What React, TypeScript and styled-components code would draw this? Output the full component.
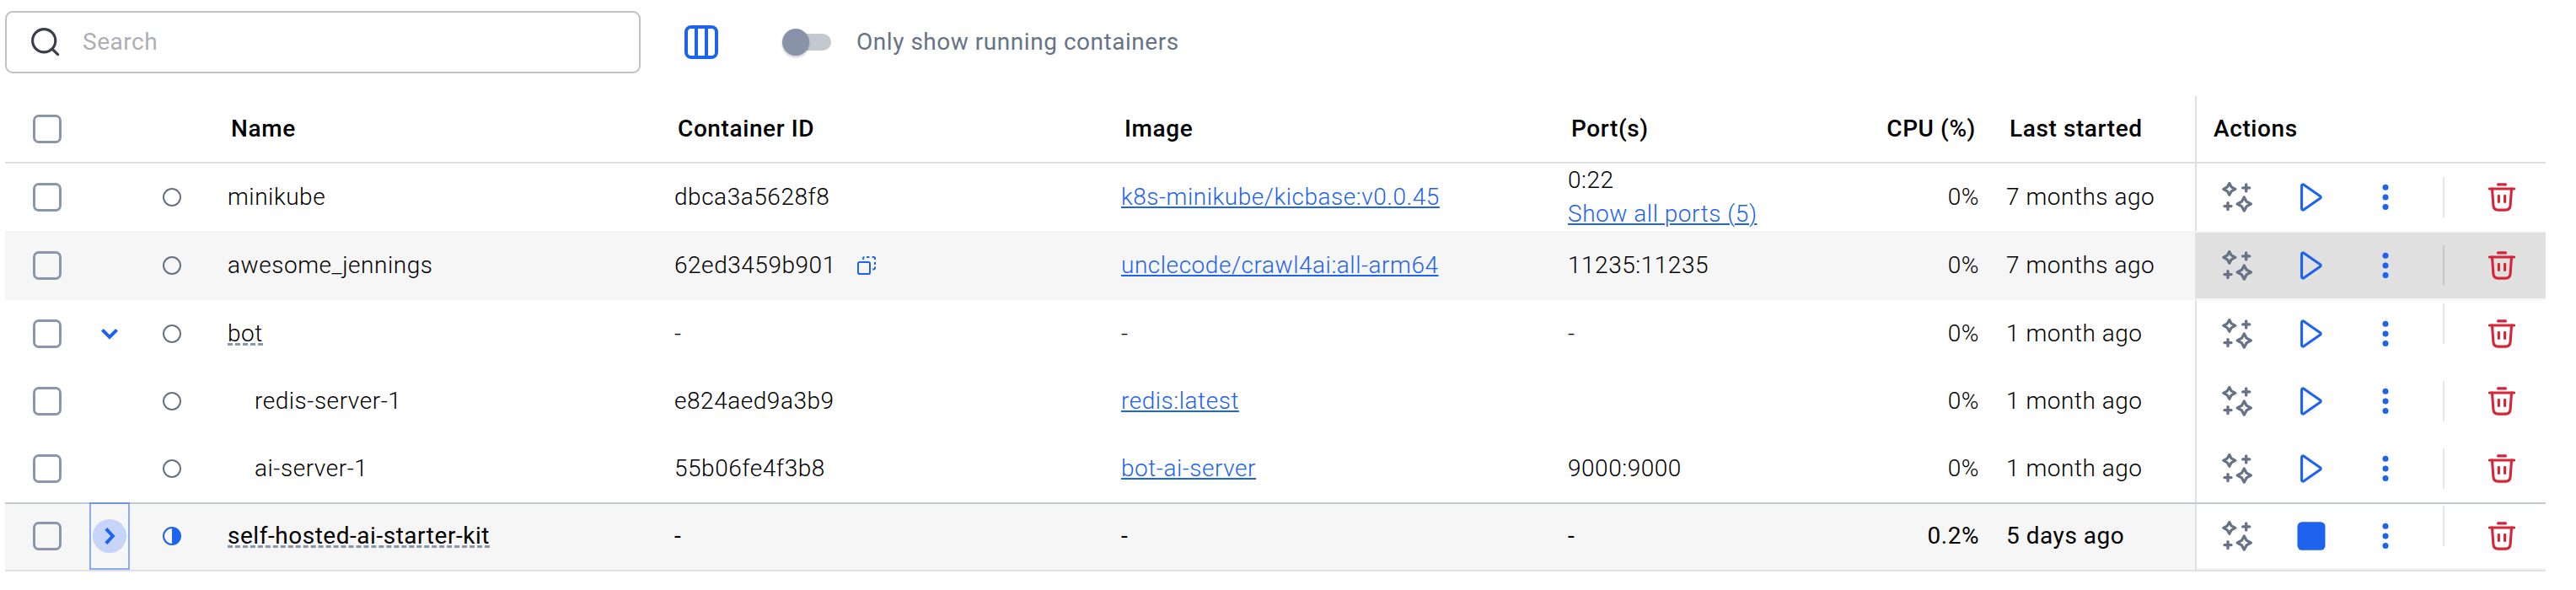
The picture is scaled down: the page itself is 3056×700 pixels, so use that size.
import React from "react";
import styled, { createGlobalStyle, css } from "styled-components";

const blue = "#1d63ed";
const slate = "#677285";
const slateLight = "#8b95ab";
const line = "#e0e0e0";
const red = "#d52536";

const GlobalStyle = createGlobalStyle`
  * { box-sizing: border-box; }
  body { margin: 0; background: #fff; }
`;

const Page = styled.main`
  width: 3056px;
  height: 700px;
  padding: 13px 36px 0 6px;
  overflow: hidden;
  background: #fff;
  color: #000;
  font-family: Roboto, sans-serif;
  font-size: 28px;
  font-weight: 300;
  line-height: 40px;
  letter-spacing: 0.53px;
`;

const Toolbar = styled.header`
  display: flex;
  align-items: center;
  height: 74px;
  margin-bottom: 27px;
`;

const SearchBox = styled.label`
  display: flex;
  align-items: center;
  gap: 26px;
  width: 754px;
  height: 74px;
  padding-left: 28px;
  border: 2px solid #c1c1c3;
  border-radius: 9px;
`;

const SearchInput = styled.input`
  flex: 1;
  min-width: 0;
  padding: 0;
  border: 0;
  outline: 0;
  background: none;
  font: inherit;
  font-weight: 400;
  letter-spacing: 0.53px;
  &::placeholder {
    color: #adafb4;
    opacity: 1;
  }
`;

const ColumnsButton = styled.button`
  display: flex;
  margin-left: 52px;
  padding: 0;
  border: 0;
  background: none;
`;

const Switch = styled.span`
  position: relative;
  width: 58px;
  height: 32px;
  margin-left: 76px;
`;

const SwitchTrack = styled.span`
  position: absolute;
  inset: 6px 0 6px 4px;
  border-radius: 10px;
  background: #c4c8d1;
`;

const SwitchKnob = styled.span`
  position: absolute;
  top: 0;
  left: 0;
  width: 32px;
  height: 32px;
  border-radius: 50%;
  background: #8993a8;
  box-shadow: 0 2px 3px rgba(0, 0, 0, 0.22);
`;

const SwitchLabel = styled.span`
  margin-left: 30px;
  color: ${slate};
  font-weight: 400;
`;

const Table = styled.section`
  display: flex;
  flex-direction: column;
`;

type RowKind = "plain" | "ruled" | "hovered" | "selected";

const Row = styled.div<{ $kind: RowKind }>`
  display: grid;
  grid-template-columns: 100px 48px 100px 530px 530px 530px 346px 174px 240px 416px;
  grid-template-rows: minmax(0, 1fr);
  height: 80px;
  ${(p) =>
    p.$kind === "ruled" &&
    css`
      height: 82px;
      border-bottom: 2px solid #f5f5f5;
    `}
  ${(p) =>
    p.$kind === "hovered" &&
    css`
      background: #f6f6f6;
      border-bottom: 2px solid #f5f5f5;
    `}
  ${(p) =>
    p.$kind === "selected" &&
    css`
      height: 82px;
      border-top: 2px solid #c4c8d1;
      border-bottom: 2px solid ${line};
      background: #f6f6f6;
      font-weight: 400;
      & > * {
        padding-bottom: 2px;
      }
    `}
`;

const HeaderRow = styled(Row)`
  border-bottom: 2px solid ${line};
  font-weight: 500;
  letter-spacing: 0.6px;
`;

const Cell = styled.div`
  display: flex;
  align-items: center;
  min-width: 0;
  padding-left: 16px;
  white-space: nowrap;
`;

const NameCell = styled(Cell)<{ $child?: boolean }>`
  padding-left: ${(p) => (p.$child ? 48 : 16)}px;
`;

const PortsCell = styled(Cell)`
  flex-direction: column;
  align-items: flex-start;
  justify-content: center;
`;

const NumberCell = styled(Cell)`
  justify-content: flex-end;
  padding-right: 16px;
`;

const HeadCell = styled(Cell)`
  padding-left: 20px;
`;

const HeadNumberCell = styled(NumberCell)`
  padding-right: 20px;
`;

const CheckCell = styled(Cell)`
  padding-left: 33px;
`;

const CenterCell = styled(Cell)`
  justify-content: center;
  padding-left: 0;
`;

const Checkbox = styled.span`
  width: 34px;
  height: 34px;
  border: 3px solid ${slateLight};
  border-radius: 7px;
`;

const Link = styled.a`
  color: ${blue};
  text-decoration: underline 2px;
  text-underline-offset: 2px;
`;

const GroupName = styled.span`
  display: block;
  height: 26px;
  margin-top: 2px;
  border-bottom: 3px dashed ${slateLight};
  line-height: 23px;
`;

const CopyButton = styled.span`
  display: flex;
  margin-left: 25px;
`;

const ExpandButton = styled.span<{ $focused: boolean }>`
  display: flex;
  flex: none;
  align-items: center;
  justify-content: center;
  width: 48px;
  height: 80px;
  ${(p) =>
    p.$focused &&
    css`
      border: 2px solid rgba(29, 99, 237, 0.5);
    `}
`;

const ExpandHalo = styled.span<{ $focused: boolean }>`
  display: flex;
  flex: none;
  width: 40px;
  height: 40px;
  border-radius: 50%;
  background: ${(p) => (p.$focused ? "#c6d4f7" : "transparent")};
`;

const HeadActions = styled(Cell)`
  padding-left: 20px;
  border-left: 2px solid ${line};
`;

const Actions = styled.div<{ $kind: RowKind }>`
  display: flex;
  align-items: center;
  padding-left: 30px;
  border-left: 2px solid ${line};
  background: ${(p) => (p.$kind === "hovered" ? line : "#fff")};
  ${(p) =>
    p.$kind === "selected" &&
    css`
      box-shadow: inset 0 -2px 0 #f5f5f5;
    `}
`;

const ActionButton = styled.span<{ $gap?: number }>`
  display: flex;
  margin-left: ${(p) => p.$gap ?? 52}px;
`;

const Divider = styled.span<{ $top: number }>`
  align-self: flex-start;
  width: 2px;
  height: 48px;
  margin: ${(p) => p.$top}px 0 0 50px;
  background: rgba(0, 0, 0, 0.1);
`;

const Svg36 = (p: { children: React.ReactNode }) => (
  <svg width="36" height="36" viewBox="0 0 36 36" fill="none" strokeLinecap="round" strokeLinejoin="round">
    {p.children}
  </svg>
);

const SearchIcon = () => (
  <svg width="36" height="36" viewBox="0 0 36 36" fill="none" stroke="#393f49" strokeLinecap="round">
    <circle cx="16.2" cy="16.3" r="13.6" strokeWidth="3.2" />
    <path d="M26.4 26.6 32.6 32.6" strokeWidth="3.2" />
  </svg>
);

const ColumnsIcon = () => (
  <svg width="40" height="40" viewBox="0 0 40 40" fill="none" stroke={blue} strokeWidth="4">
    <rect x="2" y="2" width="36" height="36" rx="6" />
    <path d="M14 2v36M26 2v36" />
  </svg>
);

const SparklesIcon = () => (
  <Svg36>
    <g stroke={slate} strokeWidth="3.2">
      <path d="M8.8 1.5 11.2 5.9 15.8 8.4 11.2 10.8 8.8 15.3 6.3 10.8 1.8 8.4 6.3 5.9Z" />
      <path d="M26.3 18 29.1 23.2 34.4 26 29.1 28.9 26.3 34.2 23.5 28.9 18.2 26 23.5 23.2Z" />
      <path d="M28.7 2.9v8M24.7 6.9h8M7 24.6v8M3 28.6h8" strokeWidth="3.4" />
    </g>
  </Svg36>
);

const PlayIcon = () => (
  <Svg36>
    <path
      d="M6.6 4.4v27.2c0 1.3 1.4 1.9 2.5 1.2l19.4-13.5c.9-.6.9-2 0-2.6L9.1 3.2C8 2.5 6.6 3.1 6.6 4.4Z"
      stroke={blue}
      strokeWidth="3.1"
    />
  </Svg36>
);

const StopIcon = () => (
  <Svg36>
    <rect x="1.5" y="1.2" width="33" height="33.6" rx="5.5" fill={blue} />
  </Svg36>
);

const MoreIcon = () => (
  <Svg36>
    <g fill={blue}>
      <circle cx="18" cy="6.3" r="3.5" />
      <circle cx="18" cy="18" r="3.5" />
      <circle cx="18" cy="29.6" r="3.5" />
    </g>
  </Svg36>
);

const TrashIcon = () => (
  <Svg36>
    <g stroke={red} strokeWidth="3.1">
      <path d="M13.5 2.9h9M3.4 8h29.2M14.4 16.2v7.2M21.6 16.2v7.2" />
      <path d="M6.5 8 7.9 27.6C8.2 31.4 9.8 33.1 13.4 33.1h9.2c3.6 0 5.2-1.7 5.5-5.5L29.5 8" />
    </g>
  </Svg36>
);

const CopyIcon = () => (
  <svg width="22" height="22" viewBox="0 0 22 22" fill="none" stroke={blue} strokeWidth="2">
    <rect x="1" y="7" width="14" height="14" rx="1.8" />
    <path d="M7 4V2.8C7 1.8 7.6 1.2 8.6 1.1M11 1h3.4M17.6 1h1.8C20.4 1 21 1.7 21 2.6V4M21 7v3M21 12.6v1.2c0 1-.7 1.6-1.6 1.6h-1.2" />
  </svg>
);

const StatusIcon = ({ partial }: { partial: boolean }) => (
  <svg width="22" height="22" viewBox="0 0 22 22" fill="none">
    <circle cx="11" cy="11" r="10" stroke={partial ? blue : slate} strokeWidth="2" />
    {partial && <path d="M11 1a10 10 0 0 1 0 20Z" fill={blue} />}
  </svg>
);

const ExpandIcon = ({ open, offset }: { open: boolean; offset: number }) => (
  <svg width="40" height="40" viewBox="0 0 40 40" fill="none" stroke={blue} strokeWidth="4">
    <path transform={`translate(${offset} 0)`} d={open ? "M11.4 15.4 20 24 28.6 15.4" : "M15.8 11.4 23.8 20 15.8 28.6"} />
  </svg>
);

interface Container {
  name: string;
  id: string;
  image?: string;
  port?: string;
  morePorts?: string;
  cpu: string;
  started: string;
  kind: RowKind;
  group?: "open" | "closed";
  child?: boolean;
  dividerTop: number;
}

const containers: Container[] = [
  { name: "minikube", id: "dbca3a5628f8", image: "k8s-minikube/kicbase:v0.0.45", port: "0:22", morePorts: "Show all ports (5)", cpu: "0%", started: "7 months ago", kind: "ruled", dividerTop: 16 },
  { name: "awesome_jennings", id: "62ed3459b901", image: "unclecode/crawl4ai:all-arm64", port: "11235:11235", cpu: "0%", started: "7 months ago", kind: "hovered", dividerTop: 15 },
  { name: "bot", id: "-", port: "-", cpu: "0%", started: "1 month ago", kind: "plain", group: "open", dividerTop: 4 },
  { name: "redis-server-1", id: "e824aed9a3b9", image: "redis:latest", cpu: "0%", started: "1 month ago", kind: "plain", child: true, dividerTop: 16 },
  { name: "ai-server-1", id: "55b06fe4f3b8", image: "bot-ai-server", port: "9000:9000", cpu: "0%", started: "1 month ago", kind: "plain", child: true, dividerTop: 16 },
  { name: "self-hosted-ai-starter-kit", id: "-", port: "-", cpu: "0.2%", started: "5 days ago", kind: "selected", group: "closed", dividerTop: 2 },
];

function ContainerRow({ item }: { item: Container }) {
  const selected = item.kind === "selected";
  return (
    <Row $kind={item.kind}>
      <CheckCell>
        <Checkbox />
      </CheckCell>
      <CenterCell>
        {item.group && (
          <ExpandButton $focused={selected}>
            <ExpandHalo $focused={selected}>
              <ExpandIcon open={item.group === "open"} offset={0} />
            </ExpandHalo>
          </ExpandButton>
        )}
      </CenterCell>
      <CenterCell>
        <StatusIcon partial={selected} />
      </CenterCell>
      <NameCell $child={item.child}>{item.group ? <GroupName>{item.name}</GroupName> : item.name}</NameCell>
      <Cell>
        {item.id}
        {item.kind === "hovered" && (
          <CopyButton>
            <CopyIcon />
          </CopyButton>
        )}
      </Cell>
      <Cell>{item.image ? <Link>{item.image}</Link> : "-"}</Cell>
      <PortsCell>
        {item.port && <span>{item.port}</span>}
        {item.morePorts && <Link>{item.morePorts}</Link>}
      </PortsCell>
      <NumberCell>{item.cpu}</NumberCell>
      <Cell>{item.started}</Cell>
      <Actions $kind={item.kind}>
        <ActionButton $gap={0}>
          <SparklesIcon />
        </ActionButton>
        <ActionButton>{selected ? <StopIcon /> : <PlayIcon />}</ActionButton>
        <ActionButton>
          <MoreIcon />
        </ActionButton>
        <Divider $top={item.dividerTop} />
        <ActionButton $gap={50}>
          <TrashIcon />
        </ActionButton>
      </Actions>
    </Row>
  );
}

export default function App() {
  return (
    <Page>
      <GlobalStyle />
      <Toolbar>
        <SearchBox>
          <SearchIcon />
          <SearchInput placeholder="Search" />
        </SearchBox>
        <ColumnsButton>
          <ColumnsIcon />
        </ColumnsButton>
        <Switch>
          <SwitchTrack />
          <SwitchKnob />
        </Switch>
        <SwitchLabel>Only show running containers</SwitchLabel>
      </Toolbar>
      <Table>
        <HeaderRow $kind="plain">
          <CheckCell>
            <Checkbox />
          </CheckCell>
          <span />
          <span />
          <HeadCell>Name</HeadCell>
          <HeadCell>Container ID</HeadCell>
          <HeadCell>Image</HeadCell>
          <HeadCell>Port(s)</HeadCell>
          <HeadNumberCell>CPU (%)</HeadNumberCell>
          <HeadCell>Last started</HeadCell>
          <HeadActions>Actions</HeadActions>
        </HeaderRow>
        {containers.map((item) => (
          <ContainerRow key={item.name} item={item} />
        ))}
      </Table>
    </Page>
  );
}
